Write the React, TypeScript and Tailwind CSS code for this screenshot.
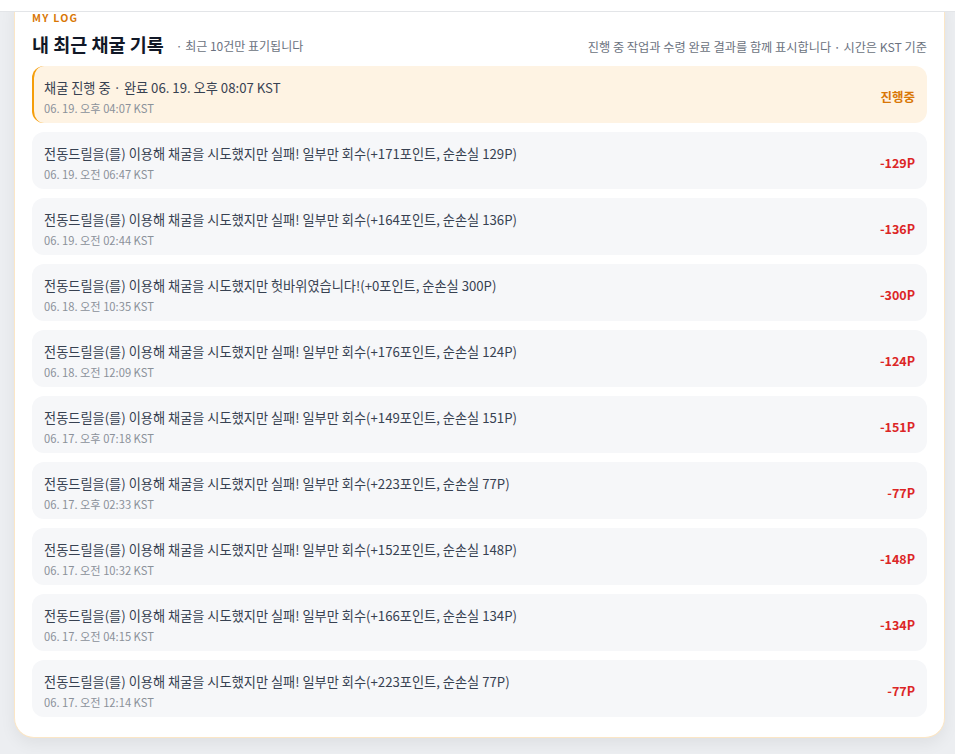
const rows = [
  { title: '전동드릴을(를) 이용해 채굴을 시도했지만 실패! 일부만 회수(+171포인트, 순손실 129P)', time: '06. 19. 오전 06:47 KST', value: '-129P' },
  { title: '전동드릴을(를) 이용해 채굴을 시도했지만 실패! 일부만 회수(+164포인트, 순손실 136P)', time: '06. 19. 오전 02:44 KST', value: '-136P' },
  { title: '전동드릴을(를) 이용해 채굴을 시도했지만 헛바위였습니다!(+0포인트, 순손실 300P)', time: '06. 18. 오전 10:35 KST', value: '-300P' },
  { title: '전동드릴을(를) 이용해 채굴을 시도했지만 실패! 일부만 회수(+176포인트, 순손실 124P)', time: '06. 18. 오전 12:09 KST', value: '-124P' },
  { title: '전동드릴을(를) 이용해 채굴을 시도했지만 실패! 일부만 회수(+149포인트, 순손실 151P)', time: '06. 17. 오후 07:18 KST', value: '-151P' },
  { title: '전동드릴을(를) 이용해 채굴을 시도했지만 실패! 일부만 회수(+223포인트, 순손실 77P)', time: '06. 17. 오후 02:33 KST', value: '-77P' },
  { title: '전동드릴을(를) 이용해 채굴을 시도했지만 실패! 일부만 회수(+152포인트, 순손실 148P)', time: '06. 17. 오전 10:32 KST', value: '-148P' },
  { title: '전동드릴을(를) 이용해 채굴을 시도했지만 실패! 일부만 회수(+166포인트, 순손실 134P)', time: '06. 17. 오전 04:15 KST', value: '-134P' },
  { title: '전동드릴을(를) 이용해 채굴을 시도했지만 실패! 일부만 회수(+223포인트, 순손실 77P)', time: '06. 17. 오전 12:14 KST', value: '-77P' },
];

function LogRow({ title, time, value }: { title: string; time: string; value: string }) {
  return (
    <div className="flex h-[57px] items-center justify-between rounded-[12px] bg-[#f6f7f9] pl-3 pr-3">
      <div className="flex flex-col pt-[4px]">
        <span className="text-[13.2px] leading-[19px] text-[#374151]">{title}</span>
        <span className="mt-[3px] text-[11.2px] leading-[16px] text-[#8b919a]">{time}</span>
      </div>
      <span className="pt-[5px] text-[12.5px] font-bold text-[#dc2626]">{value}</span>
    </div>
  );
}

export default function App() {
  return (
    <div
      className="relative min-h-[754px] bg-[#eceef1] pl-[14px] pr-[10px]"
      style={{ fontFamily: '"Noto Sans CJK KR", "Noto Sans", sans-serif' }}
    >
      <div className="absolute inset-x-0 top-0 z-10 h-[12px] border-b border-[#e3e5e8] bg-white" />
      <div className="rounded-b-[20px] border-x border-b border-[#fbe6c6] bg-white px-[17px] pb-[20px] pt-[11px] shadow-[0_6px_16px_rgba(0,0,0,0.06)]">
        <div className="text-[10.5px] font-bold leading-[14px] tracking-[0.12em] text-[#d97706]">MY LOG</div>
        <div className="mt-[6px] flex items-end justify-between">
          <div className="flex items-end gap-[12px]">
            <h2 className="text-[18.5px] font-bold leading-[26px] text-[#111827]">내 최근 채굴 기록</h2>
            <span className="pb-[2px] text-[12px] leading-[18px] text-[#6b7280]">· 최근 10건만 표기됩니다</span>
          </div>
          <span className="pb-[1px] text-[12.2px] leading-[18px] text-[#6b7280]">진행 중 작업과 수령 완료 결과를 함께 표시합니다 · 시간은 KST 기준</span>
        </div>
        <div className="mt-[9px] flex flex-col gap-[9px]">
          <div className="flex h-[57px] items-center justify-between rounded-[12px] border-l-2 border-[#f59e0b] bg-[#fef3e3] pl-[10px] pr-3">
            <div className="flex flex-col pt-[4px]">
              <span className="text-[13.2px] leading-[19px] text-[#374151]">채굴 진행 중 · 완료 06. 19. 오후 08:07 KST</span>
              <span className="mt-[3px] text-[11.2px] leading-[16px] text-[#8b919a]">06. 19. 오후 04:07 KST</span>
            </div>
            <span className="pt-[5px] text-[12.5px] font-bold text-[#d97706]">진행중</span>
          </div>
          {rows.map((r, i) => (
            <LogRow key={i} {...r} />
          ))}
        </div>
      </div>
    </div>
  );
}
